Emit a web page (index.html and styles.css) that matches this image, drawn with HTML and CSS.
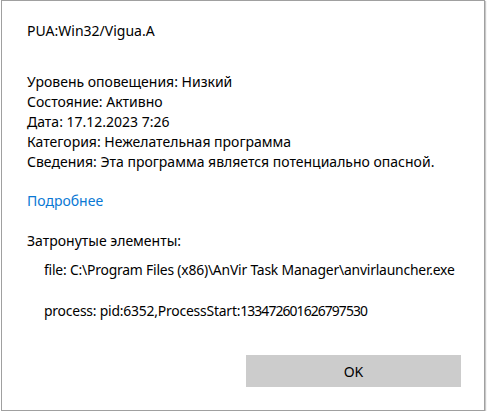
FILE: index.html
```html
<!DOCTYPE html>
<html lang="ru">
<head>
<meta charset="utf-8">
<link rel="stylesheet" href="styles.css">
</head>
<body>
<div class="dialog">
  <div class="content">
    <div class="title">PUA:Win32/Vigua.A</div>
    <div class="details">
      <div>Уровень оповещения: Низкий</div>
      <div>Состояние: Активно</div>
      <div>Дата: 17.12.2023 7:26</div>
      <div>Категория: Нежелательная программа</div>
      <div>Сведения: Эта программа является потенциально опасной.</div>
    </div>
    <a class="more" href="#">Подробнее</a>
    <div class="affected">Затронутые элементы:</div>
    <div class="items">
      <div class="item">file: C:\Program Files (x86)\AnVir Task Manager\anvirlauncher.exe</div>
      <div class="item">process: pid:6352,ProcessStart:<span class="num">133472601626797530</span></div>
    </div>
  </div>
  <div class="actions">
    <button class="ok">OK</button>
  </div>
</div>
</body>
</html>
```
FILE: styles.css
```css
html, body {
  margin: 0;
  padding: 0;
  background: #ffffff;
}
body {
  font-family: "Noto Sans", "Open Sans", sans-serif;
  font-size: 14px;
  color: #000;
}
.dialog {
  box-sizing: border-box;
  width: 484px;
  height: 411px;
  margin-left: 1px;
  border: 1px solid #a0a0a0;
  box-shadow: 1px 1px 1px #c8c8c8;
  background: #fff;
  display: flex;
  flex-direction: column;
  padding: 0 0 0 25px;
}
.content {
  line-height: 20px;
  flex: 1;
}
.title {
  margin-top: 20px;
}
.details {
  margin-top: 31px;
}
.more {
  display: block;
  margin-top: 19px;
  color: #0a78d4;
  text-decoration: none;
  width: max-content;
}
.affected {
  margin-top: 20px;
}
.items {
  padding-left: 17px;
  margin-top: 9px;
  display: flex;
  flex-direction: column;
  gap: 21px;
  font-size: 13.9px;
  letter-spacing: -0.2px;
}
.num {
  letter-spacing: -0.9px;
}
.actions {
  display: flex;
  justify-content: flex-end;
  padding: 0 23px 23px 0;
}
.ok {
  width: 215px;
  height: 32px;
  border: none;
  background: #cccccc;
  font-family: inherit;
  font-size: 14px;
  color: #000;
  padding: 0;
}
```
